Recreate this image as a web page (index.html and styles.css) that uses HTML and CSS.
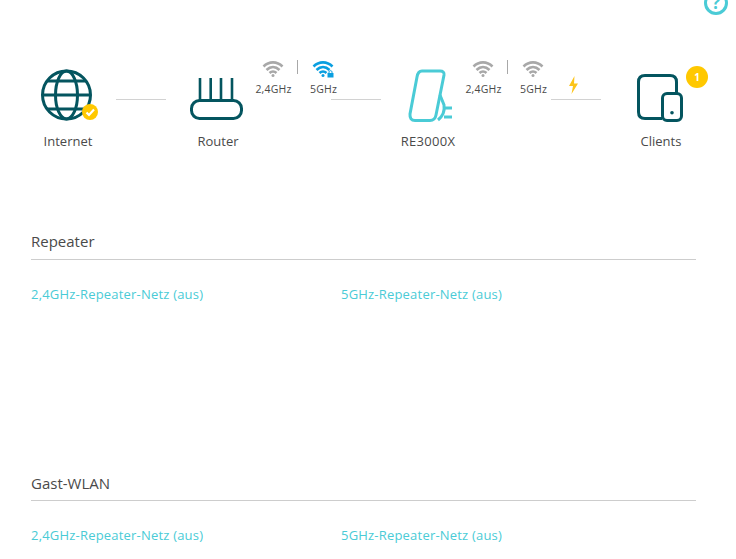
FILE: index.html
```html
<!DOCTYPE html>
<html lang="de">
<head>
  <meta charset="UTF-8" />
  <title>Netzwerkübersicht</title>
  <link rel="stylesheet" href="styles.css">
</head>
<body>
  <div class="help"><span>?</span></div>

  <div class="topology">
    <div class="node">
      <div class="node-icon">
        <svg width="62" height="56" viewBox="0 0 62 56" fill="none" stroke="#04555f" stroke-width="3">
          <circle cx="29.500" cy="29" r="24" />
          <ellipse cx="29.500" cy="29" rx="11" ry="24" />
          <path d="M5 29H54M10 15H49M10 43H49" />
          <circle cx="53" cy="46" r="8" fill="#ffc800" stroke="none" />
          <path d="M49.500 46.500L52 49L57 43.500" stroke="#fff" stroke-width="2.200" />
        </svg>
      </div>
      <div class="node-name">Internet</div>
    </div>
    <div class="link link-first"><div class="line"></div></div>
    <div class="node">
      <div class="node-icon">
        <svg width="56" height="56" viewBox="0 0 56 56" fill="none" stroke="#04555f" stroke-width="3">
          <rect x="1.500" y="34.500" width="50" height="18" rx="8" />
          <path d="M10 34V12M20.700 34V12M31 34V12M42 34V12" stroke-width="2.600" />
        </svg>
      </div>
      <div class="node-name">Router</div>
    </div>
    <div class="link link-bands">
      <div class="bands">
        <div class="band">
          <svg class="wifi" width="22" height="18" viewBox="0 0 22 18" fill="none" stroke="#a8a8a8" stroke-width="2.600">
            <path d="M1.500 6.500C7 1 15 1 20.500 6.500M4.500 10C8.500 6 13.500 6 17.500 10M7.500 13C9.500 11.200 12.500 11.200 14.500 13" />
            <circle cx="11" cy="15.500" r="1.500" fill="#a8a8a8" stroke="none" />
          </svg>
          <span>2,4GHz</span>
        </div>
        <div class="band-sep"></div>
        <div class="band">
          <svg class="wifi" width="22" height="18" viewBox="0 0 22 18" fill="none" stroke="#0a9fe0" stroke-width="2.600">
            <path d="M1.500 6.500C7 1 15 1 20.500 6.500M4.500 10C8.500 6 13.500 6 17.500 10M7.500 13C9.500 11.200 12.500 11.200 14.500 13" />
            <circle cx="11" cy="15.500" r="1.500" fill="#0a9fe0" stroke="none" />
            <rect x="15.500" y="13" width="6" height="4.500" fill="#0a9fe0" stroke="none" />
            <path d="M17 13V11.800C17 10.300 20 10.300 20 11.800V13" stroke-width="1" />
          </svg>
          <span>5GHz</span>
        </div>
      </div>
      <div class="line"></div>
    </div>
    <div class="node node-re">
      <div class="node-icon">
        <svg width="50" height="56" viewBox="0 0 50 56" fill="none" stroke="#4acbd6" stroke-width="3">
          <path d="M19 5H37Q41.500 5 41 9L33 49Q32 54.500 27 54.500H12Q6.500 54.500 7 48L14 11Q15 5 19 5Z" />
          <path d="M37 29L41 39C42 46 40 50 35 54M41 42H49M41 51H49" />
        </svg>
      </div>
      <div class="node-name">RE3000X</div>
    </div>
    <div class="link link-power">
      <div class="bands">
        <div class="band">
          <svg class="wifi" width="22" height="18" viewBox="0 0 22 18" fill="none" stroke="#a8a8a8" stroke-width="2.600">
            <path d="M1.500 6.500C7 1 15 1 20.500 6.500M4.500 10C8.500 6 13.500 6 17.500 10M7.500 13C9.500 11.200 12.500 11.200 14.500 13" />
            <circle cx="11" cy="15.500" r="1.500" fill="#a8a8a8" stroke="none" />
          </svg>
          <span>2,4GHz</span>
        </div>
        <div class="band-sep"></div>
        <div class="band">
          <svg class="wifi" width="22" height="18" viewBox="0 0 22 18" fill="none" stroke="#a8a8a8" stroke-width="2.600">
            <path d="M1.500 6.500C7 1 15 1 20.500 6.500M4.500 10C8.500 6 13.500 6 17.500 10M7.500 13C9.500 11.200 12.500 11.200 14.500 13" />
            <circle cx="11" cy="15.500" r="1.500" fill="#a8a8a8" stroke="none" />
          </svg>
          <span>5GHz</span>
        </div>
      </div>
      <svg class="bolt" width="11" height="18" viewBox="0 0 11 18" fill="#fcc419">
        <path d="M6.500 0L1 10H5L3.500 18L10 7.500H6Z" />
      </svg>
      <div class="line"></div>
    </div>
    <div class="node node-clients">
      <div class="node-icon">
        <svg width="52" height="56" viewBox="0 0 52 56" fill="none" stroke="#04555f" stroke-width="3">
          <path d="M27 52.500H10Q3.500 52.500 3.500 46V16Q3.500 9.500 10 9.500H35Q41.500 9.500 41.500 16V27" />
          <rect x="27.500" y="27.500" width="19" height="27" rx="4.500" />
          <circle cx="37" cy="46.700" r="1.800" fill="#04555f" stroke="none" />
        </svg>
        <div class="badge">1</div>
      </div>
      <div class="node-name">Clients</div>
    </div>
  </div>

  <div class="section section-repeater">
    <div class="section-title">Repeater</div>
    <div class="section-links">
      <a class="net-link">2,4GHz-Repeater-Netz (aus)</a>
      <a class="net-link">5GHz-Repeater-Netz (aus)</a>
    </div>
  </div>

  <div class="section section-guest">
    <div class="section-title">Gast-WLAN</div>
    <div class="section-links">
      <a class="net-link">2,4GHz-Repeater-Netz (aus)</a>
      <a class="net-link">5GHz-Repeater-Netz (aus)</a>
    </div>
  </div>
</body>
</html>
```

FILE: styles.css
```css
html, body {
  height: 559px;
  overflow: hidden;
}
body {
  margin: 0;
  padding: 0 40px 0 31px;
  background: #fff;
  color: #4a4a4a;
  font-family: "Open Sans", sans-serif;
  font-size: 13px;
}
.help {
  position: absolute;
  top: -9px;
  left: 704px;
  width: 18px;
  height: 18px;
  border: 3px solid #4acbd6;
  border-radius: 50%;
  text-align: center;
  color: #4acbd6;
  font-size: 17px;
  font-weight: 700;
  line-height: 18px;
}
.topology {
  display: flex;
  height: 150px;
  padding-top: 66px;
  box-sizing: border-box;
}
.node {
  width: 74px;
  flex: none;
  text-align: center;
}
.node-icon {
  position: relative;
  height: 56px;
  display: flex;
  justify-content: center;
}
.node-name {
  margin-top: 9px;
  line-height: 20px;
}
.node-re .node-name {
  letter-spacing: 0.3px;
}
.link {
  flex: none;
  display: flex;
  flex-direction: column;
  position: relative;
  height: 34px;
}
.line {
  width: 50px;
  height: 1px;
  background: #d2d2d2;
  margin-top: auto;
}
.link-first {
  width: 50px;
  margin: 0 15px 0 11px;
}
.link-bands {
  width: 126px;
  margin-right: 10px;
  align-items: flex-end;
}
.link-power {
  width: 136px;
  margin-right: 23px;
  align-items: flex-end;
}
.bands {
  position: absolute;
  top: -6px;
  left: 0;
  display: flex;
  align-items: flex-start;
}
.band {
  width: 37px;
  display: flex;
  flex-direction: column;
  align-items: center;
  font-size: 10.5px;
  letter-spacing: 0.2px;
  line-height: 12px;
}
.band-sep {
  width: 1px;
  height: 14px;
  margin: 0 6px;
  background: #a8a8a8;
  transform: translateX(-1px);
}
.wifi {
  display: block;
  margin: 0 2px 5px 0;
}
.bolt {
  position: absolute;
  top: 10px;
  right: 22px;
}
.badge {
  position: absolute;
  top: 0;
  right: -10px;
  width: 22px;
  height: 22px;
  border-radius: 50%;
  background: #ffc800;
  color: #fff;
  font-size: 10px;
  font-weight: 700;
  line-height: 22px;
}
.section-title {
  font-size: 15px;
  line-height: 20px;
  padding-bottom: 8px;
  border-bottom: 1px solid #cdcdcd;
}
.section-links {
  display: flex;
  margin-top: 26px;
}
.net-link {
  width: 310px;
  color: #4acbd6;
  line-height: 17px;
  letter-spacing: 0.2px;
}
.section-repeater {
  margin-top: 81px;
  width: 665px;
}
.section-guest {
  margin-top: 170px;
  width: 665px;
}
.section-guest .section-title {
  padding-bottom: 7px;
}
```
